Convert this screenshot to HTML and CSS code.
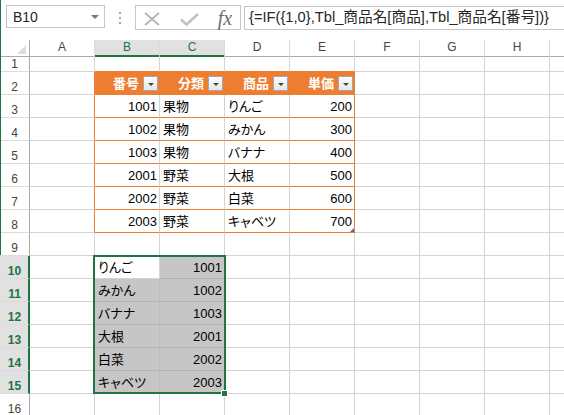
FILE: index.html
```html
<!DOCTYPE html>
<html lang="ja">
<head>
<meta charset="utf-8">
<title>Excel</title>
<link rel="stylesheet" href="styles.css">
</head>
<body>
<div class="edge"></div>
<div class="topbar">
  <div class="namebox"><span>B10</span><i class="caret"></i></div>
  <div class="dots"><i></i><i></i><i></i></div>
  <div class="fxbtns">
    <svg class="ico-x" width="16" height="14" viewBox="0 0 16 14"><path d="M1 1 L15 13 M15 1 L1 13" stroke="#b3b3b3" stroke-width="1.8" fill="none"/></svg>
    <svg class="ico-ok" width="19" height="13" viewBox="0 0 19 13"><path d="M1 6.5 L6.5 11.5 L18 1" stroke="#c2c2c2" stroke-width="2.6" fill="none"/></svg>
    <span class="fx">fx</span>
  </div>
  <div class="formula">{=IF({1,0},Tbl_商品名[商品],Tbl_商品名[番号])}</div>
</div>
<div class="sheet">
  <div class="row hdr">
    <div class="corner"><i class="tri"></i></div>
    <div class="ch">A</div><div class="ch on">B</div><div class="ch on">C</div><div class="ch">D</div><div class="ch">E</div><div class="ch">F</div><div class="ch">G</div><div class="ch">H</div><div class="ch"></div>
  </div>
  <div class="row short">
    <div class="rh">1</div>
    <div class="c"></div><div class="c tt"></div><div class="c tt"></div><div class="c tt"></div><div class="c tt"></div><div class="c"></div><div class="c"></div><div class="c"></div><div class="c"></div>
  </div>
  <div class="row">
    <div class="rh">2</div>
    <div class="c tl"></div>
    <div class="c th"><span>番号</span><i class="flt"></i></div>
    <div class="c th"><span>分類</span><i class="flt"></i></div>
    <div class="c th"><span>商品</span><i class="flt"></i></div>
    <div class="c th"><span>単価</span><i class="flt"></i></div>
    <div class="c"></div><div class="c"></div><div class="c"></div><div class="c"></div>
  </div>
  <div class="row">
    <div class="rh">3</div>
    <div class="c tl"></div><div class="c td num">1001</div><div class="c td">果物</div><div class="c td">りんご</div><div class="c td te num">200</div>
    <div class="c"></div><div class="c"></div><div class="c"></div><div class="c"></div>
  </div>
  <div class="row">
    <div class="rh">4</div>
    <div class="c tl"></div><div class="c td num">1002</div><div class="c td">果物</div><div class="c td">みかん</div><div class="c td te num">300</div>
    <div class="c"></div><div class="c"></div><div class="c"></div><div class="c"></div>
  </div>
  <div class="row">
    <div class="rh">5</div>
    <div class="c tl"></div><div class="c td num">1003</div><div class="c td">果物</div><div class="c td">バナナ</div><div class="c td te num">400</div>
    <div class="c"></div><div class="c"></div><div class="c"></div><div class="c"></div>
  </div>
  <div class="row">
    <div class="rh">6</div>
    <div class="c tl"></div><div class="c td num">2001</div><div class="c td">野菜</div><div class="c td">大根</div><div class="c td te num">500</div>
    <div class="c"></div><div class="c"></div><div class="c"></div><div class="c"></div>
  </div>
  <div class="row">
    <div class="rh">7</div>
    <div class="c tl"></div><div class="c td num">2002</div><div class="c td">野菜</div><div class="c td">白菜</div><div class="c td te num">600</div>
    <div class="c"></div><div class="c"></div><div class="c"></div><div class="c"></div>
  </div>
  <div class="row">
    <div class="rh">8</div>
    <div class="c tl"></div><div class="c td num">2003</div><div class="c td">野菜</div><div class="c td">キャベツ</div><div class="c td te num last">700<i class="rsz"></i></div>
    <div class="c"></div><div class="c"></div><div class="c"></div><div class="c"></div>
  </div>
  <div class="row">
    <div class="rh">9</div>
    <div class="c"></div><div class="c"></div><div class="c"></div><div class="c"></div><div class="c"></div><div class="c"></div><div class="c"></div><div class="c"></div><div class="c"></div>
  </div>
  <div class="row">
    <div class="rh on">10</div>
    <div class="c"></div><div class="c act">りんご</div><div class="c sel num">1001</div>
    <div class="c"></div><div class="c"></div><div class="c"></div><div class="c"></div><div class="c"></div><div class="c"></div>
  </div>
  <div class="row">
    <div class="rh on">11</div>
    <div class="c"></div><div class="c sel">みかん</div><div class="c sel num">1002</div>
    <div class="c"></div><div class="c"></div><div class="c"></div><div class="c"></div><div class="c"></div><div class="c"></div>
  </div>
  <div class="row">
    <div class="rh on">12</div>
    <div class="c"></div><div class="c sel">バナナ</div><div class="c sel num">1003</div>
    <div class="c"></div><div class="c"></div><div class="c"></div><div class="c"></div><div class="c"></div><div class="c"></div>
  </div>
  <div class="row">
    <div class="rh on">13</div>
    <div class="c"></div><div class="c sel">大根</div><div class="c sel num">2001</div>
    <div class="c"></div><div class="c"></div><div class="c"></div><div class="c"></div><div class="c"></div><div class="c"></div>
  </div>
  <div class="row">
    <div class="rh on">14</div>
    <div class="c"></div><div class="c sel">白菜</div><div class="c sel num">2002</div>
    <div class="c"></div><div class="c"></div><div class="c"></div><div class="c"></div><div class="c"></div><div class="c"></div>
  </div>
  <div class="row">
    <div class="rh on">15</div>
    <div class="c"></div><div class="c sel">キャベツ</div><div class="c sel num">2003</div>
    <div class="c"></div><div class="c"></div><div class="c"></div><div class="c"></div><div class="c"></div><div class="c"></div>
  </div>
  <div class="row">
    <div class="rh">16</div>
    <div class="c"></div><div class="c"></div><div class="c"></div><div class="c"></div><div class="c"></div><div class="c"></div><div class="c"></div><div class="c"></div><div class="c"></div>
  </div>
  <div class="selbox"></div>
  <div class="handle"></div>
</div>
</body>
</html>
```
FILE: styles.css
```css
html, body {
  margin: 0;
  padding: 0;
  width: 564px;
  height: 415px;
  overflow: hidden;
  background: #fff;
}
body {
  position: relative;
  font-family: "Liberation Sans", "Noto Sans CJK JP", sans-serif;
  font-feature-settings: "palt";
  color: #000;
}
.edge {
  position: absolute;
  left: 0;
  top: 0;
  width: 1px;
  height: 255px;
  background: #217346;
  z-index: 5;
}

/* formula bar */
.topbar {
  display: flex;
  align-items: flex-start;
  height: 40px;
  white-space: nowrap;
}
.namebox {
  box-sizing: border-box;
  margin: 5px 0 0 6px;
  width: 102px;
  height: 23px;
  border: 1px solid #c6c6c6;
  display: flex;
  align-items: center;
  justify-content: space-between;
  padding: 0 5px 0 6px;
  font-size: 14px;
  color: #262626;
}
.caret {
  width: 0;
  height: 0;
  border-left: 4px solid transparent;
  border-right: 4px solid transparent;
  border-top: 4px solid #7a7a7a;
}
.dots {
  margin: 12px 0 0 14px;
  display: flex;
  flex-direction: column;
  gap: 3px;
}
.dots i {
  width: 2px;
  height: 2px;
  background: #a6a6a6;
}
.fxbtns {
  box-sizing: border-box;
  margin: 5px 0 0 14px;
  width: 110px;
  height: 25px;
  border: 1px solid #c6c6c6;
  display: flex;
  align-items: center;
  padding-left: 8px;
}
.ico-x { margin-top: 2px; }
.ico-ok { margin: 3px 0 0 20px; }
.fx {
  margin-left: 19px;
  font-family: "Liberation Serif", serif;
  font-style: italic;
  font-size: 20px;
  color: #6b6b6b;
  line-height: 20px;
  margin-top: 1px;
}
.formula {
  box-sizing: border-box;
  margin: 6px 0 0 3px;
  height: 24px;
  flex: 0 0 auto;
  width: 320px;
  border: 1px solid #c6c6c6;
  border-right: none;
  padding: 0 0 0 4px;
  font-size: 14.7px;
  line-height: 21px;
  color: #262626;
}

/* sheet */
.sheet {
  position: relative;
}
.row {
  display: grid;
  grid-template-columns: 30px repeat(9, 65px);
  height: 23px;
}
.row.hdr, .row.short { height: 16px; }
.row > div {
  box-sizing: border-box;
  min-width: 0;
}
.corner {
  border-right: 1px solid #ababab;
  border-bottom: 1px solid #ababab;
  display: flex;
  justify-content: flex-end;
  align-items: flex-end;
  padding: 0 3px 2px 0;
}
.tri {
  width: 0;
  height: 0;
  border-left: 9px solid transparent;
  border-bottom: 9px solid #dcdcdc;
}
.ch {
  border-right: 1px solid #dcdcdc;
  border-bottom: 1px solid #ababab;
  font-size: 12px;
  line-height: 15px;
  text-align: center;
  color: #444;
}
.ch.on {
  background: #e1e1e1;
  color: #217346;
  border-bottom: 2px solid #217346;
}
.rh {
  border-right: 1px solid #ababab;
  border-bottom: 1px solid #dcdcdc;
  font-size: 12px;
  line-height: 14px;
  color: #444;
  display: flex;
  align-items: flex-end;
  justify-content: center;
}
.rh.on {
  background: #e1e1e1;
  color: #217346;
  font-weight: bold;
  border-right: 2px solid #217346;
  padding-left: 1px;
}
.c {
  border-right: 1px solid #d4d4d4;
  border-bottom: 1px solid #d4d4d4;
  display: flex;
  align-items: flex-end;
  padding: 0 2px 3px 3px;
  font-size: 13px;
  line-height: 15px;
  white-space: nowrap;
  overflow: hidden;
}
.c.num { justify-content: flex-end; }
.c.tt { border-bottom-color: #ed7d31; }
.c.tl { border-right-color: #ed7d31; }
.c.td { border-bottom-color: #ed7d31; }
.c.te { border-right-color: #ed7d31; }
.c.th {
  background: #ed7d31;
  border-color: #ed7d31;
  color: #fff;
  font-weight: bold;
  justify-content: flex-end;
  align-items: center;
  gap: 4px;
  padding: 1px 1px 0 3px;
}
.flt {
  box-sizing: border-box;
  width: 15px;
  height: 15px;
  border: 1px solid #a3a6ad;
  background: linear-gradient(#fdfdfd, #e4e6eb);
  display: flex;
  align-items: center;
  justify-content: center;
}
.flt::after {
  content: "";
  width: 0;
  height: 0;
  border-left: 3px solid transparent;
  border-right: 3px solid transparent;
  border-top: 3px solid #444;
  margin-top: 1px;
}
.c.last { position: relative; }
.rsz {
  position: absolute;
  right: 0;
  bottom: 0;
  width: 0;
  height: 0;
  border-left: 4px solid transparent;
  border-bottom: 4px solid #5a5fc8;
}
.c.sel {
  background: #c6c6c6;
  border-bottom-color: #b3b3b3;
  border-right-color: #bdbdbd;
}
.c.act {
  background: #fff;
}
.selbox {
  position: absolute;
  left: 93px;
  top: 215px;
  width: 133px;
  height: 139px;
  box-sizing: border-box;
  border: 2px solid #217346;
}
.handle {
  position: absolute;
  left: 221px;
  top: 350px;
  width: 7px;
  height: 7px;
  box-sizing: border-box;
  border: 1px solid #fff;
  background: #217346;
}
```
